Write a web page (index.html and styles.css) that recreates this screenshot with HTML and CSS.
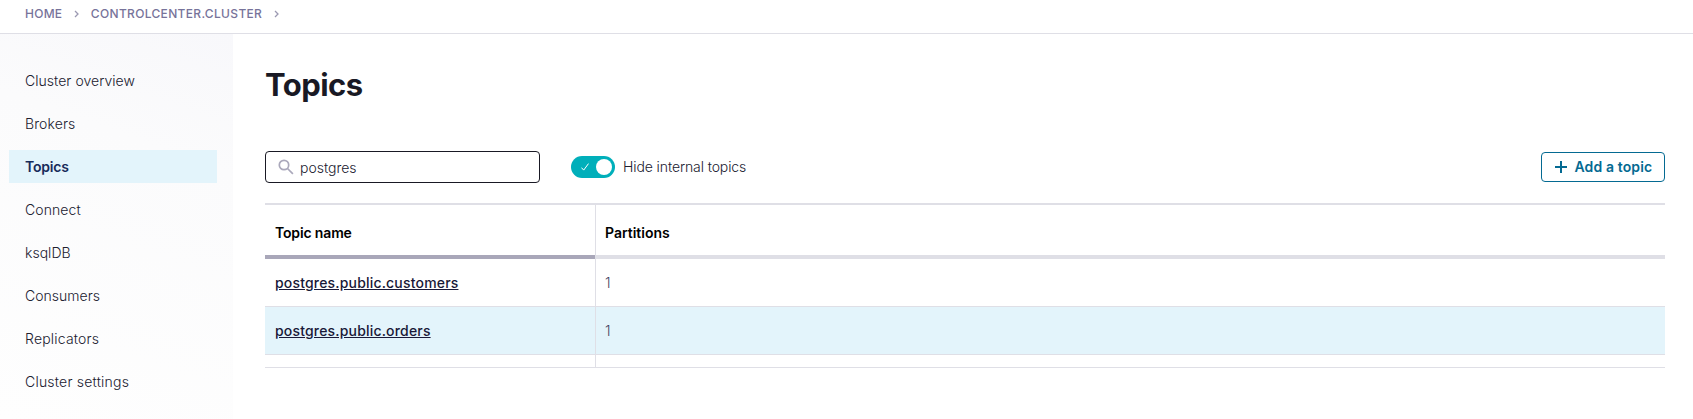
FILE: index.html
```html
<!DOCTYPE html>
<html lang="en">
<head>
<meta charset="utf-8">
<title>Topics</title>
<link rel="stylesheet" href="styles.css">
</head>
<body>
<header class="breadcrumbs">
  <a class="crumb crumb-home">HOME</a>
  <svg class="chevron" width="5" height="8" viewBox="0 0 5 8"><path d="M1 1l3 3-3 3"/></svg>
  <a class="crumb crumb-cluster">CONTROLCENTER.CLUSTER</a>
  <svg class="chevron" width="5" height="8" viewBox="0 0 5 8"><path d="M1 1l3 3-3 3"/></svg>
</header>
<div class="layout">
  <nav class="sidebar">
    <a class="nav-item"><span class="t-overview">Cluster overview</span></a>
    <a class="nav-item"><span class="t-brokers">Brokers</span></a>
    <a class="nav-item active"><span class="t-topics">Topics</span></a>
    <a class="nav-item"><span class="t-connect">Connect</span></a>
    <a class="nav-item"><span class="t-ksql">ksqlDB</span></a>
    <a class="nav-item"><span class="t-consumers">Consumers</span></a>
    <a class="nav-item"><span class="t-replicators">Replicators</span></a>
    <a class="nav-item"><span class="t-settings">Cluster settings</span></a>
  </nav>
  <main class="content">
    <h1 class="title">Topics</h1>
    <div class="toolbar">
      <div class="search">
        <svg class="search-icon" width="16" height="16" viewBox="0 0 16 16"><circle cx="6" cy="6" r="4.7"/><path d="M9.5 9.5l5.4 5.4"/></svg>
        <span class="search-text">postgres</span>
      </div>
      <div class="toggle">
        <svg class="check" width="8" height="8" viewBox="0 0 8 8"><path d="M.4 4.6l2.3 2.5L7.5.6"/></svg>
        <span class="knob"></span>
      </div>
      <span class="toggle-label">Hide internal topics</span>
      <button class="add-button">
        <svg class="plus" width="12" height="12" viewBox="0 0 12 12"><path d="M6 0v12M0 6h12"/></svg>
        <span class="add-text">Add a topic</span>
      </button>
    </div>
    <div class="table">
      <div class="row head"><div class="cell sorted">Topic name</div><div class="cell">Partitions</div></div>
      <div class="row"><div class="cell"><a class="link">postgres.public.customers</a></div><div class="cell num">1</div></div>
      <div class="row hover"><div class="cell"><a class="link">postgres.public.orders</a></div><div class="cell num">1</div></div>
      <div class="row filler"><div class="cell"></div><div class="cell"></div></div>
    </div>
  </main>
</div>
</body>
</html>
```
FILE: styles.css
```css
* { box-sizing: border-box; }
body {
  margin: 0;
  height: 419px;
  overflow: hidden;
  display: flex;
  flex-direction: column;
  font: 300 14px/20px Inter, "Liberation Sans", sans-serif;
  color: #20202f;
  background: #fff;
}
.breadcrumbs {
  height: 34px;
  flex: none;
  display: flex;
  align-items: center;
  padding: 0 0 6px 25px;
  border-bottom: 1px solid #dfdfe6;
}
.crumb { font-size: 12px; font-weight: 500; color: #77739a; }
.crumb-home { letter-spacing: .25px; }
.crumb-cluster { letter-spacing: .33px; }
.chevron { margin: 1px 12px 0 11.5px; fill: none; stroke: #9c99b2; stroke-width: 1.3; }
.layout { display: flex; flex: 1; }
.sidebar {
  width: 233px;
  display: flex;
  flex-direction: column;
  gap: 10px;
  padding: 30px 16px 0 9px;
  background: linear-gradient(200deg, #f8f8fb, #fbfbfc 30%, #fefefe);
}
.nav-item {
  height: 33px;
  display: flex;
  align-items: center;
  padding-left: 16px;
}
.t-overview { letter-spacing: .04px; }
.t-brokers, .t-connect { letter-spacing: .1px; }
.t-topics { letter-spacing: -.18px; }
.t-ksql, .t-consumers { letter-spacing: .02px; }
.t-replicators { letter-spacing: .2px; }
.t-settings { letter-spacing: .22px; }
.active { background: #e3f4fb; color: #172b5a; font-weight: 600; }
.content { flex: 1; padding: 31px 28px 0 32px; }
.title {
  margin: 0;
  font-size: 31px;
  line-height: 40px;
  font-weight: 700;
  letter-spacing: -.55px;
  color: #191924;
}
.toolbar { height: 32px; margin: 46px 0 20px; display: flex; align-items: center; }
.search {
  width: 275px;
  height: 32px;
  display: flex;
  align-items: center;
  gap: 7px;
  padding-left: 12px;
  border: 1px solid #191924;
  border-radius: 4px;
}
.search-text { padding-top: 2px; margin-left: -1px; }
.search-icon { fill: none; stroke: #aaa8bb; stroke-width: 1.7; }
.toggle {
  width: 44px;
  height: 22px;
  margin: 0 8px 0 31px;
  padding: 0 3px 0 10px;
  border-radius: 11px;
  background: #00afba;
  display: flex;
  align-items: center;
  justify-content: space-between;
}
.toggle-label { letter-spacing: -.1px; }
.check { fill: none; stroke: #fff; stroke-width: 1; }
.knob { width: 16px; height: 16px; border-radius: 50%; background: #fff; }
.add-button {
  width: 124px;
  height: 30px;
  margin-left: auto;
  padding: 0 0 0 13px;
  display: flex;
  align-items: center;
  gap: 7.5px;
  font: 600 14px/20px Inter, "Liberation Sans", sans-serif;
  letter-spacing: .12px;
  white-space: nowrap;
  color: #046a92;
  background: #fff;
  border: 1px solid #046a92;
  border-radius: 4px;
}
.plus { stroke: #046a92; stroke-width: 2; }
.table { border-top: 2px solid #dfdfe6; }
.row { display: grid; grid-template-columns: 330px 1fr; height: 48px; }
.cell {
  display: flex;
  align-items: center;
  padding-left: 10px;
  border-bottom: 1px solid #dfdfe6;
}
.cell + .cell { box-shadow: inset 1px 0 #dfdfe6; }
.head { height: 54px; color: #000; font-weight: 600; }
.head .cell { padding-top: 6px; border-bottom: 4px solid #dfdfe6; }
.head .sorted { border-bottom-color: #a9a7b9; letter-spacing: -.15px; }
.hover { background: #e3f4fb; }
.filler { height: 13px; }
.link { font-weight: 500; letter-spacing: .18px; color: #191938; text-decoration: underline; }
.num { color: #45435f; }
```
